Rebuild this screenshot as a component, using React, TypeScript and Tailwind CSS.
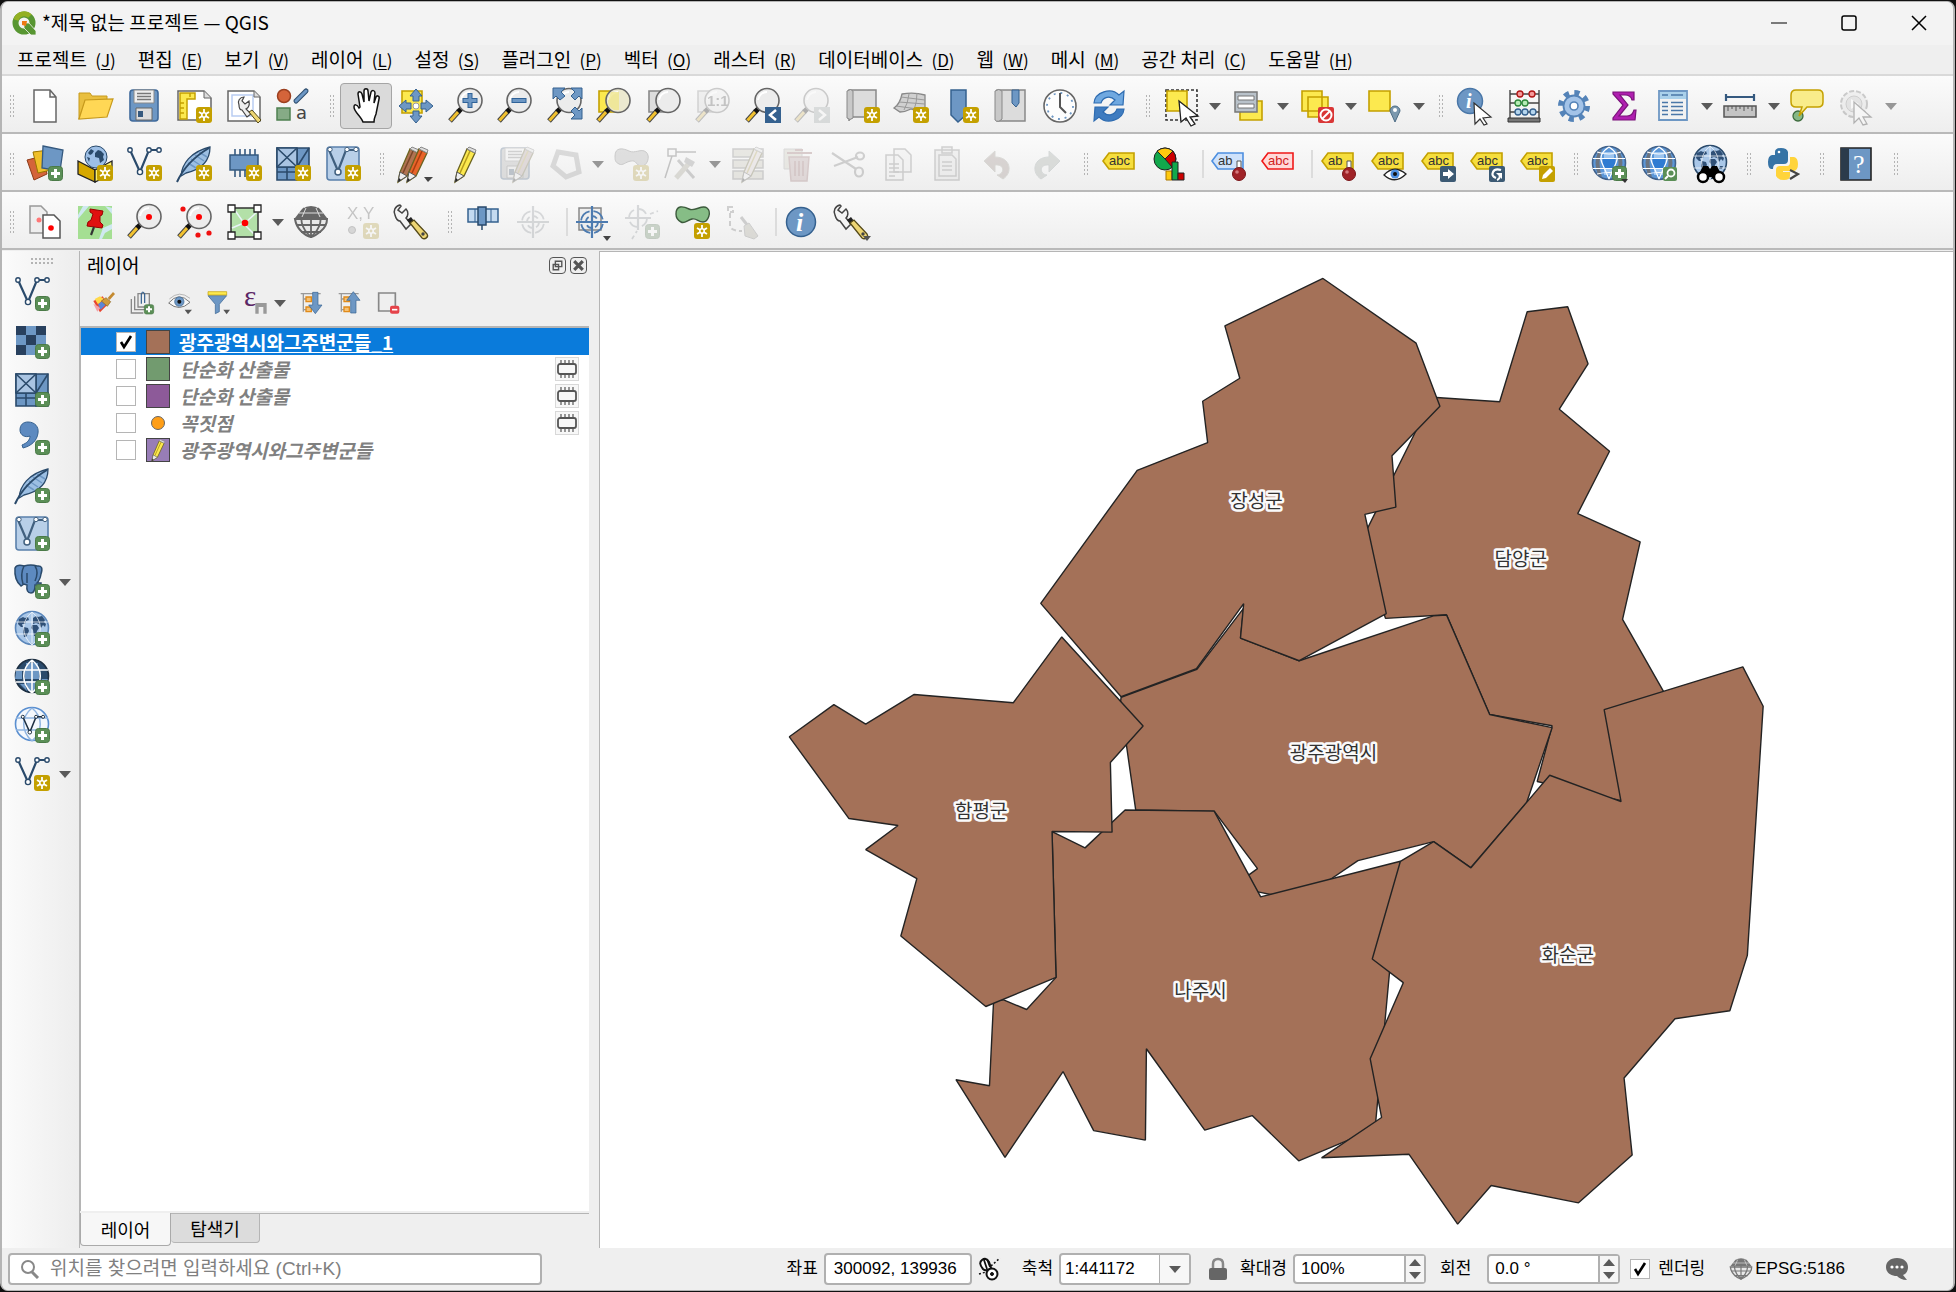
import { useState } from 'react'
import type { ReactNode } from 'react'
import clsx from 'clsx'

const navy = '#2a4a6b'
const blue = '#6d97c4'
const yellow = '#fce94f'
const gold = '#c4a000'

const menus = [
  ['프로젝트', 'J'],
  ['편집', 'E'],
  ['보기', 'V'],
  ['레이어', 'L'],
  ['설정', 'S'],
  ['플러그인', 'P'],
  ['벡터', 'O'],
  ['래스터', 'R'],
  ['데이터베이스', 'D'],
  ['웹', 'W'],
  ['메시', 'M'],
  ['공간 처리', 'C'],
  ['도움말', 'H'],
]

/* ---------- shared icon parts, all on a 36 x 36 grid ---------- */

const StarBadge = ({ y = 19 }: { y?: number }) => (
  <g transform={`translate(20 ${y})`}>
    <rect width="16" height="16" rx="3" fill={gold} />
    <path d="M8 2v12M3 5l10 6M3 11l10-6" stroke="#fff" strokeWidth="1.800" />
    <circle cx="8" cy="8" r="3" fill="#fff" />
    <circle cx="8" cy="8" r="1.400" fill={gold} />
  </g>
)

const PlusBadge = () => (
  <g transform="translate(21 20)">
    <rect x=".5" y=".5" width="14" height="14" rx="3" fill="#5b8f57" stroke="#4a7a47" />
    <path d="M7.500 3v9M3 7.500h9" stroke="#fff" strokeWidth="3" />
  </g>
)

const Handle = () => (
  <>
    <path d="M2 33l9-10" stroke="#444" strokeWidth="5" />
    <path d="M2.500 32.500l8-9" stroke="#f2c230" strokeWidth="3" />
    <path d="M10 24l4-4" stroke="#111" strokeWidth="5" />
  </>
)

const Lens = ({ children, fill = '#ececec' }: { children?: ReactNode; fill?: string }) => (
  <>
    <Handle />
    <circle cx="22" cy="12.500" r="12" fill={fill} stroke="#666" strokeWidth="1.600" />
    <path d="M13 12a9 9 0 0 1 9-8" stroke="#fff" strokeWidth="2" fill="none" />
    {children}
  </>
)

const VNodes = ({ color = navy }: { color?: string }) => (
  <g stroke={color} fill="#fff">
    <path d="M4 4l10 22 9-22h10" fill="none" strokeWidth="2.200" />
    <circle cx="4" cy="4" r="2.200" strokeWidth="1.400" />
    <circle cx="23" cy="4" r="2.200" strokeWidth="1.400" />
    <circle cx="33" cy="4" r="2.200" strokeWidth="1.400" />
    <circle cx="14" cy="26" r="2.600" strokeWidth="1.400" />
  </g>
)

const Feather = () => (
  <>
    <path d="M5 30C6 18 14 6 34 1c0 12-7 22-24 26z" fill="#9cbfe3" stroke={navy} strokeWidth="1.300" />
    <path d="M12 17l8 5M15 13l9 6M19 9l9 6M23 6l8 5" stroke={blue} strokeWidth="1.500" />
    <path d="M1 36C6 25 16 12 33 2" stroke={navy} strokeWidth="2" fill="none" />
  </>
)

const Mesh = () => (
  <g fill={blue} stroke={navy} strokeWidth="1.600">
    <path d="M2 2h20v19H2zM22 2h12v19H22zM2 21h20v13H2z" />
    <path d="M2 2h20v19H2z" fill="#a9c4e2" />
    <path d="M2 2l20 19M22 2L2 21M34 2L22 21M12 21v13M2 26h20" fill="none" />
    <path d="M22 21h12v13H22z" />
  </g>
)

const VTile = () => (
  <>
    <rect x="2" y="1" width="32" height="33" rx="3" fill="#b8cfe8" stroke="#5a80ab" strokeWidth="1.600" />
    <g stroke="#41607f" fill="#fff">
      <path d="M4 4l9 21 8-21h11" fill="none" strokeWidth="2.200" />
      <circle cx="13" cy="26" r="3" strokeWidth="1.500" />
      <circle cx="22" cy="3.500" r="2.200" />
      <circle cx="31" cy="3.500" r="2.200" />
      <circle cx="5" cy="3.500" r="2.200" />
    </g>
  </>
)

const Globe = ({ land, dark, stroke = '#5a86ba' }: { land?: boolean; dark?: boolean; stroke?: string }) => (
  <>
    <circle cx="18" cy="16" r="16.500" fill={dark ? navy : '#a9c7e8'} stroke={stroke} strokeWidth="1.600" />
    {dark && <path d="M2 11h6v8H1zM12 3h12v8H12zM11 11h14v8H11zM28 19h6l-4 7h-4zM6 24h5l2 7zM12 21h11l-1 10h-8z" fill={blue} />}
    {land && (
      <path
        d="M5 7l4-2 2 1 3-1 1 3-3 1-1 3-3 0 1 3-2 0-3-3zM10 15l4 1 1 3-3 6-2 0-1-6zM19 6l3-2 2 1 4-1 3 4-1 2 2 2-1 3-2-2-2 3-2-4-3-1-3 1zM18 13l5 0 2 3-2 3-1 5-2 0-1-6-2-2zM28 20l3 0-1 3-3 0z"
        fill="#2f5077"
      />
    )}
    <path
      d="M18 0v33M2 10h32M2 22h32M18 0c-11 9-11 23 0 33M18 0c11 9 11 23 0 33"
      fill="none" stroke="#fff" strokeWidth={dark ? 1.6 : 1} strokeOpacity={dark ? 1 : 0.7}
    />
  </>
)

const BlueGlobe = () => (
  <>
    <circle cx="18" cy="17" r="16.500" fill="#5c97d8" stroke="#40618a" strokeWidth="1.600" />
    <path d="M11 3q-5 14 0 28l-4-2Q2 17 7 6zM25 3q5 14 0 28l4-2q5-12 0-23z" fill="#6b7480" />
    <path d="M13 6h10v6H13zM13 23h10v6H13z" fill="#9cc4ef" />
    <path d="M12 13h12v9H12z" fill="#2f7bd2" />
    <path d="M2 12.500h32M2 22.500h32M18 1q-11 7-7 16t7 16M18 1q11 7 7 16t-7 16M6 6q12 4 24 0M6 28q12-3 24 0" fill="none" stroke="#fff" strokeWidth="1.200" />
  </>
)

const Wrench = () => (
  <>
    <path d="M2 11c-2-4 0-9 5-10l1 1-3 4 4 3 4-4c3 3 2 7 0 9l5 6-5 5-6-8c-2 0-4-2-5-6z" fill="#f4f4f4" stroke="#444" strokeWidth="1.500" />
    <path d="M14 16l4-3 3 4-4 3z" fill="#222" />
    <path d="M17 19l4-3 13 14c2 3-2 6-5 4z" fill="#eed673" stroke="#554a1a" strokeWidth="1.300" />
    <circle cx="30" cy="30" r="1.700" fill="#444" />
  </>
)

const Tag = ({ fill = '#f6de3d', stroke = gold, text = 'abc', color = '#333' }: { fill?: string; stroke?: string; text?: string; color?: string }) => (
  <>
    <path d="M2 15l6-8h25v16H8z" fill={fill} stroke={stroke} strokeWidth="1.600" />
    <text x="8" y="19" fontSize="13" fontFamily="Liberation Sans, sans-serif" fill={color}>{text}</text>
  </>
)

const Pin = () => (
  <>
    <path d="M27 15h4v9h-4z" fill="#fff" stroke="#555" />
    <circle cx="29" cy="28" r="6.500" fill="#a02328" stroke="#7a1519" />
    <circle cx="27" cy="26" r="1.800" fill="#d47b7e" />
  </>
)

const Floppy = ({ fill = blue }: { fill?: string }) => (
  <>
    <rect x="4" y="2" width="28" height="31" rx="3" fill={fill} stroke="#3f6a9b" strokeWidth="1.600" />
    <path d="M8 2h20v13H8z" fill="#eee" stroke="#888" />
    <path d="M11 5.500h14M11 8.500h14M11 11.500h14" stroke="#777" strokeWidth="1.500" />
    <path d="M10 20h16v12H10z" fill="#ddd" stroke="#666" />
    <path d="M12 23h5v6h-5z" fill="#35597f" />
  </>
)

const Pencil = ({ fill = yellow, line = '#b59b1c', x = 0 }: { fill?: string; line?: string; x?: number }) => (
  <g transform={`translate(${x} 0)`}>
    <path d="M10 26L20 3l8 4-11 23-9 6z" fill={fill} stroke="#6b6320" strokeWidth="1.300" />
    <path d="M13 27L23 5" stroke={line} strokeWidth="1.500" />
    <path d="M20 3l2-2 7 3-1 3z" fill="#ddd" stroke="#888" />
    <path d="M10 26l7 4-9 6z" fill="#eee" stroke="#555" />
    <path d="M8 36l1-4 2 2z" fill="#222" />
  </g>
)

const Target = ({ color = '#4d7bb0' }: { color?: string }) => (
  <g fill="none" stroke={color} strokeWidth="1.800">
    <circle cx="18" cy="18" r="11" strokeDasharray="13 4" strokeDashoffset="-2" />
    <circle cx="18" cy="18" r="6" strokeDasharray="6 3" />
    <path d="M18 2v32M2 18h32" strokeWidth="2.200" />
  </g>
)

const WireGlobe = ({ color = '#666' }: { color?: string }) => (
  <>
    <path d="M9 5q9-6 18 0l7 9H2z" fill={color} />
    <path d="M2 15h32q0 7-6 12t-10 6q-5-1-10-6T2 15z" fill="#e8e8e8" stroke={color} strokeWidth="2" />
    <path d="M3 21h30M8 28h20M18 3v31M11 4c-5 10-3 20 7 29M25 4c5 10 3 20-7 29" fill="none" stroke={color} strokeWidth="1.800" />
    <path d="M13 4l-4 9M23 4l4 9M6 9h24" fill="none" stroke="#ddd" />
  </>
)

const Arrow = () => <path d="M15 14l17 15-8 0 4 7-4 1-4-7-5 5z" fill="#fff" stroke="#222" strokeWidth="1.300" />

const Tree = () => (
  <>
    <path d="M1 4h30M5 4v27M5 12h6M5 28h6" stroke="#999" strokeWidth="2" fill="none" />
    <path d="M9 9h8v7H9zM9 24h8v7H9z" fill="#f6c173" stroke="#e08a1a" strokeWidth="2" />
  </>
)

const icons: Record<string, ReactNode> = {
  new: <path d="M7 2h16l6 7v25H7zM23 2v7h6" fill="#fff" stroke="#666" strokeWidth="1.500" />,
  open: (
    <>
      <path d="M2 31V5h11l2 3h15v6H8z" fill="#e9bf3f" stroke="#c79a1c" />
      <path d="M2 31L8 12l28-1-6 18z" fill="#ffd755" stroke="#c79a1c" strokeWidth="1.200" />
    </>
  ),
  save: <Floppy />,
  layout: (
    <>
      <path d="M2 3h26l7 7v22H2z" fill="#fff" stroke="#666" strokeWidth="1.500" />
      <path d="M28 3v7h7" fill="#ddd" stroke="#666" />
      <path d="M4 5h15v6h-8v20H4z" fill={yellow} stroke={gold} strokeWidth="1.500" />
      <path d="M4 15h4M4 20h4M4 25h4M14 5v4" stroke={gold} strokeWidth="1.500" />
      <StarBadge />
    </>
  ),
  layouts: (
    <>
      <path d="M2 3h26l6 6v24H2z" fill="#fff" stroke="#666" strokeWidth="1.500" />
      <path d="M6 7h21v21H6z" fill="none" stroke="#b9cdf2" strokeWidth="1.500" />
      <path d="M28 3v6h6" fill="#ddd" stroke="#666" />
      <path d="M13 17c-2-4 1-8 5-8l-2 4 3 3 4-3c1 5-1 7-3 8l5 5-4 3-5-7c-2 0-3-2-3-5z" fill="#eee" stroke="#444" strokeWidth="1.200" />
      <path d="M23 24l3-2 9 10-3 3z" fill="#eed673" stroke="#554a1a" />
    </>
  ),
  style: (
    <>
      <circle cx="9" cy="8" r="6.500" fill="#d4643a" stroke="#9c4020" strokeWidth="1.500" />
      <path d="M21 13L31 3" stroke={navy} strokeWidth="5" strokeLinecap="round" />
      <path d="M21 13L31 3" stroke={blue} strokeWidth="3" strokeLinecap="round" />
      <path d="M2 20h13v12H2z" fill="#86ab86" stroke="#4e8050" strokeWidth="1.500" />
      <text x="21" y="31" fontSize="18" fontFamily="DejaVu Sans, sans-serif" fill="#444">a</text>
    </>
  ),
  hand: (
    <path
      d="M15 34c-2-6-9-10-9-15 0-3 3-3 5 1l1-1-2-13c0-3 3-3 4 0l2 8 0-11c0-3 4-3 4 0l1 10 2-9c1-2 4-2 4 1l-1 10 2-6c1-2 4-1 3 2l-3 15c-1 3-2 4-2 8z"
      fill="#fff" stroke="#111" strokeWidth="1.500"
    />
  ),
  pan: (
    <>
      <path d="M4 3h20v22H4z" fill={yellow} stroke={gold} strokeWidth="1.600" />
      <g fill={blue} stroke="#35618f">
        <path d="M18 1l6 7h-3v5h-6V8h-3zM18 35l6-7h-3v-5h-6v5h-3zM1 18l7-6v3h5v6H8v3zM35 18l-7-6v3h-5v6h5v3z" />
      </g>
      <circle cx="18" cy="18" r="3" fill="#fff" stroke="#999" />
    </>
  ),
  zoomIn: <Lens><path d="M22 5v15M14.500 12.500h15" stroke="#2f6298" strokeWidth="5" /><path d="M22 6v13M15.500 12.500h13" stroke={blue} strokeWidth="3" /></Lens>,
  zoomOut: <Lens><path d="M14.500 12.500h15" stroke="#2f6298" strokeWidth="5" /><path d="M15.500 12.500h13" stroke={blue} strokeWidth="3" /></Lens>,
  zoomFull: (
    <Lens>
      <g fill={blue} stroke="#35618f">
        <path d="M6 0h12l-4 4 4 4-5 4-4-4-3 3zM35 0H24l4 4-4 4 4 4 4-4 3 3zM35 31H24l4-4-4-4 4-4 4 4 3-3z" />
      </g>
    </Lens>
  ),
  zoomSel: (
    <>
      <path d="M3 3h20v21H3z" fill={yellow} stroke={gold} strokeWidth="1.600" />
      <Lens fill="#ece9d0"><path d="M15 4h8v18h-5q-6-3-6-9z" fill="#f0e68c" opacity=".8" /></Lens>
    </>
  ),
  zoomLayer: (
    <>
      <path d="M3 3h20v21H3z" fill="#ddd" stroke="#888" strokeWidth="1.600" />
      <Lens />
    </>
  ),
  zoomNative: (
    <>
      <path d="M3 3h20v21H3z" fill="#ddd" stroke="#888" strokeWidth="1.600" />
      <Lens><text x="12" y="18" fontSize="15" fontWeight="bold" fontFamily="Liberation Sans, sans-serif" fill="#555">1:1</text></Lens>
    </>
  ),
  zoomLast: <Lens><path d="M20 19h16v16H20z" fill="#35618f" /><path d="M31 22l-6 5 6 5" stroke="#fff" strokeWidth="2.500" fill="none" /></Lens>,
  zoomNext: <Lens><path d="M20 19h16v16H20z" fill="#9aa8a8" /><path d="M25 22l6 5-6 5" stroke="#fff" strokeWidth="2.500" fill="none" /></Lens>,
  newMap: (
    <>
      <path d="M5 2h27v27H9q-4 1-4 4z" fill="#dcdcdc" stroke="#888" strokeWidth="1.500" />
      <path d="M3 3q4-3 6 0v27q-3 3-6 0z" fill="#c8c8c8" stroke="#888" />
      <StarBadge />
    </>
  ),
  map3d: (
    <>
      <path d="M1 20q6-4 8-14 12-2 23 1l0 19-14-5q-6 3-11 3z" fill="#d0d0d0" stroke="#888" strokeWidth="1.300" />
      <path d="M6 14l26 2M16 6q-1 9-5 16M24 5q0 9-3 17M3 18l29 4M8 9l24 3" fill="none" stroke="#999" />
      <StarBadge />
    </>
  ),
  newBookmark: (
    <>
      <path d="M8 2h15v25l-8 7-7-7z" fill={blue} stroke="#35618f" strokeWidth="1.500" />
      <StarBadge />
    </>
  ),
  bookmarks: (
    <>
      <path d="M5 2h28v31H5z" fill="#dcdcdc" stroke="#888" strokeWidth="1.500" />
      <path d="M3 3q4-3 7 0v28q-4 4-7 1z" fill="#c8c8c8" stroke="#888" />
      <path d="M20 2h7v13l-3 4-4-4z" fill={blue} stroke="#35618f" />
    </>
  ),
  clock: (
    <>
      <circle cx="18" cy="18" r="16" fill="#fdfdfd" stroke="#666" strokeWidth="1.600" />
      <circle cx="18" cy="18" r="13" fill="none" stroke={blue} strokeWidth="1.800" strokeDasharray="2 4.800" />
      <path d="M18 5v14l6 6" fill="none" stroke="#555" strokeWidth="2" />
    </>
  ),
  refresh: (
    <>
      <path d="M3 15C4 4 20-1 28 7l5-4-1 14H19l5-5c-5-5-12-3-14 3z" fill="#6fa8e0" stroke="#2d6bb0" strokeWidth="1.200" />
      <path d="M33 21C32 32 16 37 8 29l-5 4 1-14h13l-5 5c5 5 12 3 14-3z" fill="#3f7cc0" stroke="#2d6bb0" strokeWidth="1.200" />
    </>
  ),
  select: (
    <>
      <path d="M3 2h31v30H3z" fill="none" stroke="#333" strokeWidth="1.600" strokeDasharray="3 2" />
      <path d="M4 3h20v20H4z" fill={yellow} stroke={gold} strokeWidth="1.600" />
      <path d="M16 13l19 15-8 1 5 7-4 2-5-8-5 4z" fill="#fff" stroke="#222" strokeWidth="1.300" />
    </>
  ),
  selectForm: (
    <>
      <path d="M9 13h22v19H9z" fill={yellow} stroke={gold} strokeWidth="1.600" />
      <path d="M4 4h22v20H4z" fill="#b9c2ca" stroke="#777" strokeWidth="1.500" />
      <path d="M7 8h16v4H7zM7 16h16v4H7z" fill="#fff" stroke="#777" />
    </>
  ),
  deselect: (
    <>
      <path d="M3 3h20v20H3zM9 9h20v20H9z" fill={yellow} stroke={gold} strokeWidth="1.600" />
      <rect x="19" y="19" width="16" height="16" rx="2" fill="#d93636" />
      <circle cx="27" cy="27" r="5.500" fill="none" stroke="#fff" strokeWidth="2" />
      <path d="M23 31l8-8" stroke="#fff" strokeWidth="2" />
    </>
  ),
  selectLoc: (
    <>
      <path d="M2 3h21v20H2z" fill={yellow} stroke={gold} strokeWidth="1.600" />
      <path d="M28 34l-5-11a5 5 0 1 1 10 0z" fill="#7b98ae" stroke="#4d6d86" />
      <circle cx="28" cy="22" r="2" fill="#fff" />
    </>
  ),
  identify: (
    <>
      <circle cx="14" cy="13" r="12.500" fill={blue} stroke="#4a77a8" strokeWidth="1.500" />
      <text x="10" y="20" fontSize="20" fontStyle="italic" fontWeight="bold" fontFamily="Liberation Serif, serif" fill="#fff">i</text>
      <path d="M18 15l17 14-8 1 4 6-3 1-4-6-5 5z" fill="#fff" stroke="#333" strokeWidth="1.200" />
    </>
  ),
  abacus: (
    <>
      <path d="M4 2v28M33 2v28M4 6h29M4 15h29M4 24h29" stroke="#444" strokeWidth="1.400" />
      <path d="M2 30h32v4H2z" fill="#777" stroke="#333" />
      <g strokeWidth="1.300">
        <g fill="#f59a9a" stroke="#b01515"><circle cx="14" cy="6" r="3" /><circle cx="26" cy="6" r="3" /></g>
        <g fill="#b6ecb6" stroke="#2f8a3c"><circle cx="12" cy="15" r="3" /><circle cx="19" cy="15" r="3" /></g>
        <g fill="#b6d6ee" stroke="#35618f"><circle cx="12" cy="24" r="3" /><circle cx="19" cy="24" r="3" /><circle cx="27" cy="24" r="3" /></g>
      </g>
    </>
  ),
  gear: (
    <>
      <circle cx="18" cy="18" r="13" fill="none" stroke="#5483b8" strokeWidth="6" strokeDasharray="5 5.200" />
      <circle cx="18" cy="18" r="10.500" fill="#a3c3e8" stroke="#5483b8" strokeWidth="1.800" />
      <circle cx="18" cy="18" r="4" fill="#fff" stroke="#5483b8" strokeWidth="1.600" />
    </>
  ),
  sigma: <path d="M7 4h21v8h-2c-1-4-3-5-7-5h-5l8 10-9 11h8c4 0 6-2 7-6h2l-1 10H7v-2l10-13L7 6z" fill="#b01fb0" stroke="#7a127a" strokeWidth="1.200" />,
  table: (
    <>
      <path d="M4 3h28v29H4z" fill="#f2f2f2" stroke={blue} strokeWidth="1.800" />
      <path d="M5 4h26v7H5z" fill="#a9d0ea" />
      <path d="M7 7h6M16 7h12M7 14.500h6M16 14.500h12M7 18.500h6M16 18.500h12M7 22.500h6M16 22.500h12M7 26.500h6M16 26.500h12" stroke="#4a77a8" strokeWidth="1.500" />
    </>
  ),
  measure: (
    <>
      <path d="M4 9h28M4 6v7M32 6v7" stroke="#35597f" strokeWidth="2.200" />
      <path d="M2 18h32v11H2z" fill="#c4c4c4" stroke="#555" strokeWidth="1.500" />
      <path d="M6 18v5M10 18v3M14 18v5M18 18v3M22 18v5M26 18v3M30 18v5" stroke="#555" />
    </>
  ),
  tips: (
    <>
      <circle cx="9" cy="28" r="5" fill="#86b886" stroke="#3d6b3d" strokeWidth="1.300" />
      <path d="M7 2h22q5 0 5 5v7q0 5-5 5H18l-8 9 3-9H7q-5 0-5-5V7q0-5 5-5z" fill="#f9ec8a" stroke={gold} strokeWidth="1.500" />
    </>
  ),
  action: (
    <>
      <circle cx="15" cy="16" r="13" fill="#ddd" stroke="#666" strokeWidth="2" strokeDasharray="5 2" />
      <circle cx="15" cy="16" r="8" fill="#bbb" stroke="#777" />
      <path d="M12 11l8 5-8 5z" fill="#fff" />
      <Arrow />
    </>
  ),
  addLayers: (
    <>
      <path d="M0 14l16-4 4 18-13 6z" fill="#d4643a" stroke="#8c3a18" />
      <path d="M6 6l16-2 2 20-13 3z" fill="#efbf2a" stroke="#9a7500" />
      <path d="M16 0l20 4-3 21-18-3z" fill={blue} stroke="#35597f" strokeWidth="1.300" />
      <PlusBadge />
    </>
  ),
  geopackage: (
    <>
      <circle cx="19" cy="11" r="11" fill="#9dbfe6" stroke={navy} />
      <path d="M11 7l3-4 3 2-2 3-2 1zM18 7l3-3 3 1 3 3-1 3 1 3-4 3-1-5-4-1zM10 11l3 1-1 4z" fill={navy} />
      <path d="M1 15l17 9v12L1 28z" fill="#d6a800" stroke="#222" strokeWidth="1.300" />
      <path d="M18 24l17-9v13l-17 8z" fill="#fdf06a" stroke="#222" strokeWidth="1.300" />
      <StarBadge />
    </>
  ),
  newShp: <><VNodes /><StarBadge /></>,
  newSpatialite: <><Feather /><StarBadge /></>,
  newMemory: (
    <>
      <path d="M9 3v28M14 3v28M19 3v28M24 3v28M29 3v28" stroke="#35597f" strokeWidth="1.600" />
      <path d="M4 9h28v15H4z" fill={blue} stroke="#35597f" strokeWidth="1.500" />
      <StarBadge />
    </>
  ),
  newMesh: <><Mesh /><StarBadge /></>,
  newVirtual: <><VTile /><StarBadge /></>,
  edits: <><Pencil x={-7} fill="#b07352" line="#7a4528" /><Pencil x={2} fill="#e8642a" line="#a83c10" /><path d="M27 31h9l-5 5z" fill="#444" /></>,
  pencil: <Pencil />,
  saveEdits: <><Floppy fill="#aaa" /><Pencil x={8} fill="#b99" /></>,
  addPoly: <path d="M12 6l18 3 3 17-13 5L7 20z" fill="none" stroke="#999" strokeWidth="5" />,
  addBlob: <><path d="M2 10C2 1 10 2 16 5s12-3 17 1 1 15-5 14-4-6-10-5-8 5-12 3-4-4-4-8z" fill="#aaa" stroke="#666" /><StarBadge /></>,
  vertex: (
    <>
      <path d="M5 3h8v7H5zM13 6h20M9 10L2 32" fill="none" stroke="#555" strokeWidth="1.500" />
      <path d="M15 14l16 18" stroke="#777" strokeWidth="3" />
      <path d="M28 15L13 32" stroke="#a59f85" strokeWidth="5" />
      <path d="M23 11l9 5-3 5-8-5z" fill="#888" />
    </>
  ),
  attrEdit: (
    <>
      <path d="M3 3h30v8H3zM3 14h30v8H3zM3 25h30v8H3z" fill="#c9c5ac" stroke="#777" strokeWidth="1.500" />
      <Pencil x={4} fill="#dcc" />
    </>
  ),
  trash: (
    <>
      <path d="M4 3h18v20H4z" fill="#ccc9b0" stroke="#999" />
      <path d="M9 11h20l-2 24H11z" fill="#c39a9a" stroke="#a66" strokeWidth="1.500" />
      <path d="M7 7h25M15 4h8M15 15v15M19 15v15M23 15v15" stroke="#a66" strokeWidth="2" />
    </>
  ),
  cut: (
    <g fill="none" stroke="#777" strokeWidth="2.200">
      <path d="M2 7l24 16M4 20l24-9" />
      <ellipse cx="30" cy="10" rx="4" ry="3.500" /><ellipse cx="29" cy="26" rx="4" ry="4.500" />
    </g>
  ),
  copy: (
    <g fill="#eee" stroke="#777" strokeWidth="1.500">
      <path d="M14 3h11l6 6v17H14zM6 9h12l5 5v20H6z" />
      <path d="M9 18h10M9 22h10M9 26h10M9 30h6" />
    </g>
  ),
  paste: (
    <g fill="#ddd" stroke="#777" strokeWidth="1.500">
      <path d="M6 4h24v30H6zM13 1h10v6H13zM10 9h13l4 4v17H10z" />
      <path d="M13 16h10M13 20h10M13 24h10" />
    </g>
  ),
  undo: <path d="M5 15L16 5v6c16 0 18 16 8 22l-6-4c8-1 8-11-2-10v7z" fill="#a0867e" stroke="#998" />,
  redo: <path d="M31 15L20 5v6C4 11 2 27 12 33l6-4c-8-1-8-11 2-10v7z" fill="#99a399" stroke="#899" />,
  label: <Tag />,
  diagram: (
    <>
      <circle cx="14" cy="13" r="11" fill="#12a84c" stroke="#222" />
      <path d="M14 13L6 5q8-6 16 0z" fill="#ffc90e" stroke="#222" />
      <path d="M14 13l8-8q6 8-1 16z" fill="#c00" stroke="#222" />
      <path d="M15 25h6v9h-6z" fill="#ffc90e" stroke="#a70" />
      <path d="M21 16h6v18h-6z" fill="#12a84c" stroke="#222" />
      <path d="M27 27h6v7h-6z" fill="#c00" stroke="#222" />
    </>
  ),
  labelPin: <><Tag fill="#cfe2fb" stroke="#4d8fe0" text="ab" /><Pin /></>,
  labelRed: <Tag fill="#ffd9d9" stroke="#f01818" color="#d02020" />,
  tagPin: <><Tag text="ab" /><Pin /></>,
  tagEye: (
    <>
      <Tag />
      <path d="M14 29q10-11 22-1-11 11-22 1z" fill="#fff" stroke="#222" strokeWidth="1.300" />
      <circle cx="25" cy="28" r="4.500" fill="#4d8fe0" /><circle cx="25" cy="28" r="2" fill="#111" />
    </>
  ),
  tagMove: <><Tag /><rect x="20" y="20" width="16" height="16" rx="2" fill="#3c5a74" /><path d="M23 26h5v-3l6 5-6 5v-3h-5z" fill="#fff" /></>,
  tagRotate: (
    <>
      <Tag />
      <rect x="20" y="20" width="16" height="16" rx="2" fill="#3c5a74" />
      <path d="M32 24q-6-2-8 2t3 6" fill="none" stroke="#fff" strokeWidth="2.200" />
      <path d="M27 27h6v6z" fill="#fff" /><path d="M31 29q0 4-3 5" fill="none" stroke="#fff" strokeWidth="2" />
    </>
  ),
  tagEdit: <><Tag /><rect x="20" y="20" width="16" height="16" rx="2" fill={gold} /><path d="M23 33l1-4 7-7 3 3-7 7z" fill="#fff" /></>,
  webAdd: <><BlueGlobe /><PlusBadge /><path d="M30 33h7l-3 4z" fill="#333" /></>,
  webSearch: (
    <>
      <BlueGlobe />
      <rect x="22" y="21" width="14" height="14" rx="2" fill="#5b8f57" />
      <circle cx="30" cy="27" r="3.500" fill="none" stroke="#fff" strokeWidth="1.800" /><path d="M27 30l-3 3" stroke="#fff" strokeWidth="2" />
    </>
  ),
  metasearch: (
    <>
      <Globe land stroke={navy} />
      <path d="M6 30l5-10h5l2 3 2-3h5l5 10-5 6-6-5h-2l-6 5z" fill="#000" />
      <circle cx="11" cy="31" r="5" fill="#fff" stroke="#000" strokeWidth="2.500" />
      <circle cx="27" cy="31" r="5" fill="#fff" stroke="#000" strokeWidth="2.500" />
    </>
  ),
  python: (
    <>
      <path d="M10 9V6q0-4 6-4t7 4v8q0 4-4 4h-7q-4 0-4 5H6q-3-1-3-7t4-7h9z" fill="#3673a5" />
      <path d="M25 11h4q4 1 4 7t-4 7H18v1h7v4q0 4-6 4t-8-4v-6q0-4 4-4h7q3 0 3-4z" fill="#ffd43b" />
      <circle cx="14" cy="6" r="1.300" fill="#fff" />
      <path d="M25 24l8 4-8 5" fill="none" stroke="#444" strokeWidth="2.200" />
    </>
  ),
  help: (
    <>
      <path d="M3 2h30v32H3z" fill={blue} stroke="#222" strokeWidth="1.600" />
      <path d="M3 2h8v32H3z" fill="#2b3b4b" />
      <text x="15" y="27" fontSize="26" fontFamily="Liberation Serif, serif" fill="#fff">?</text>
    </>
  ),
  copyCoord: (
    <g stroke="#555" strokeWidth="1.500">
      <path d="M3 2h11l6 6v21H3z" fill="#eee" stroke="#999" />
      <path d="M16 11h11l6 6v17H16z" fill="#fff" />
      <circle cx="12" cy="16" r="2.500" fill="#f77" stroke="none" />
      <circle cx="24" cy="24" r="2.800" fill="red" stroke="none" />
    </g>
  ),
  mapPin: (
    <>
      <path d="M1 2h34v33H1z" fill="#a5df93" />
      <path d="M6 2l-5 9v4L12 2zM22 35l4-11 9-4v5l-7 4-3 6zM28 2l7 8V4z" fill="#cfe9f0" />
      <path d="M13 5l13 2-1 4-2 1 0 6 3 3-1 3-15-2 1-4 3-2 2-6-3-2z" fill="#e01010" stroke="#900" />
      <path d="M17 23l-3 8" stroke="#333" strokeWidth="2.200" />
    </>
  ),
  magPoint: <Lens><circle cx="22" cy="13" r="3" fill="red" /></Lens>,
  magPoints: <Lens><circle cx="22" cy="13" r="3" fill="red" /><g fill="#f01010"><circle cx="6" cy="5" r="2.600" /><circle cx="21" cy="31" r="2.600" /><circle cx="32" cy="29" r="2.600" /></g></Lens>,
  extent: (
    <>
      <path d="M5 4h27v29H5z" fill="#b3e0a8" stroke="#333" strokeWidth="1.500" />
      <path d="M8 5l12 17 10 10M6 24l14-6 11-10" fill="none" stroke="#e9f3f7" strokeWidth="1.500" />
      <circle cx="19" cy="19" r="3.300" fill="red" />
      <path d="M2 1h7v7H2zM28 1h7v7h-7zM2 28h7v7H2zM28 28h7v7h-7z" fill="#fff" stroke="#222" strokeWidth="1.300" />
    </>
  ),
  wire: <WireGlobe />,
  xy: (
    <>
      <text x="4" y="15" fontSize="17" fontFamily="Liberation Sans, sans-serif" fill="#555">X,Y</text>
      <circle cx="9" cy="26" r="3.500" fill="#999" stroke="#555" />
      <StarBadge />
    </>
  ),
  wrench: <Wrench />,
  wrenchMenu: <><Wrench /><path d="M30 32h8l-4 5z" fill="#555" /></>,
  gps: (
    <>
      <path d="M3 5h30v13H3z" fill="#c4daf0" stroke="#35618f" strokeWidth="1.500" />
      <path d="M10 5v13M26 5v13" stroke="#35618f" />
      <path d="M13 3h8v18h-8z" fill={blue} stroke={navy} strokeWidth="1.500" />
      <path d="M17 21v5" stroke={navy} strokeWidth="1.500" />
    </>
  ),
  target: <Target color="#8a939c" />,
  targetBox: (
    <>
      <path d="M5 4h22v22H5z" fill="#eee" stroke="#888" strokeWidth="1.500" />
      <Target />
      <path d="M29 32h8l-4 5z" fill="#444" />
    </>
  ),
  targetAdd: (
    <>
      <g fill="none" stroke="#8a939c" strokeWidth="1.800">
        <circle cx="14" cy="14" r="9" strokeDasharray="10 4" /><path d="M14 1v25M1 14h26" strokeWidth="2.200" />
        <path d="M8 35l5-8M26 10l8-3" strokeDasharray="4 3" />
      </g>
      <PlusBadge />
    </>
  ),
  greenBlob: <><path d="M2 10C2 1 9 2 15 5s13-5 18-1 1 14-4 14-6-4-11-3-7 5-11 3-5-4-5-8z" fill="#86bd86" stroke="#3d5b3d" strokeWidth="1.400" /><StarBadge /></>,
  brushPath: (
    <>
      <path d="M4 3h5v5H4zM6 9v13q1 5 12 5" fill="none" stroke="#777" strokeWidth="2" strokeDasharray="5 3" />
      <path d="M17 13l7 9" stroke="#777" strokeWidth="3" />
      <path d="M20 22l5-3 9 13-4 3-9-3z" fill="#a9a58c" stroke="#777" />
    </>
  ),
  info: (
    <>
      <circle cx="18" cy="18" r="14.500" fill={blue} stroke="#35618f" strokeWidth="1.500" />
      <text x="13" y="27" fontSize="26" fontStyle="italic" fontWeight="bold" fontFamily="Liberation Serif, serif" fill="#fff">i</text>
    </>
  ),
  addVector: <><VNodes /><PlusBadge /></>,
  addRaster: (
    <>
      <path d="M2 2h30v29H2z" fill={blue} />
      <path d="M2 2h10v9H2zM22 2h10v9H22zM12 11h10v10H12zM2 21h10v10H2z" fill="#28405e" />
      <PlusBadge />
    </>
  ),
  addMesh: <><Mesh /><PlusBadge /></>,
  addCsv: <><path d="M14 2c7 0 11 5 10 11-1 8-7 13-15 15l-1-3c5-2 8-5 8-9-5 2-10-1-10-6s3-8 8-8z" fill="#5d8ac0" stroke="#35618f" /><PlusBadge /></>,
  addSpatialite: <><Feather /><PlusBadge /></>,
  addVirtual: <><VTile /><PlusBadge /></>,
  addPostgis: (
    <>
      <path d="M1 4q2-4 9-2 7-2 13 0 7-1 4 8-1 6-4 9h4v2h-6q0 8-4 8-5 0-4-8l-3-1-3 2Q0 16 1 4z" fill="#5d8ac0" stroke={navy} strokeWidth="1.500" />
      <path d="M10 2q-4 8-1 18M21 2q4 6 0 15M13 9v10" fill="none" stroke={navy} strokeWidth="1.500" />
      <PlusBadge />
    </>
  ),
  addWms: <><Globe land /><PlusBadge /></>,
  addWcs: <><Globe dark stroke="#1d2f42" /><PlusBadge /></>,
  addWfs: (
    <>
      <circle cx="18" cy="16" r="16.500" fill="#f4f8fd" stroke="#5a8fd0" strokeWidth="1.600" />
      <path d="M2 10h32M2 22h32M18 0c-11 9-11 23 0 33M18 0c11 9 11 23 0 33" fill="none" stroke="#8fb4e0" strokeWidth="1.500" />
      <g transform="translate(6 6) scale(.7)"><VNodes color="#1d2f42" /></g>
      <PlusBadge />
    </>
  ),
  brush: (
    <>
      <path d="M2 15l14-7 8 12-12 12z" fill="#e8442e" /><path d="M4 12l8-4 6 4-9 8z" fill="#ffd94a" /><path d="M2 19l6 12 5-6z" fill="#f3a0a8" /><path d="M13 28l9-9-5-5-8 6z" fill="#5b86d8" />
      <path d="M14 15L23 23l5-7-7-6z" fill="#cf9a3c" stroke="#8a6420" /><path d="M25 12l8-9" stroke="#c48a30" strokeWidth="4" />
    </>
  ),
  addGroup: <><path d="M2 12v21h18M7 8v20h18M12 4h17v20H12z" fill="none" stroke="#888" strokeWidth="2" /><path d="M22 18V5q-3-7-5 0v14" fill="none" stroke="#35618f" strokeWidth="1.800" /><PlusBadge /></>,
  eye: (
    <>
      <path d="M1 18q15-18 32-1-16 15-32 1z" fill="#f8f8f8" stroke="#777" strokeWidth="1.500" /><path d="M2 12q15-14 31-1" fill="none" stroke="#999" />
      <circle cx="17" cy="16" r="7" fill={blue} stroke="#35618f" /><circle cx="17" cy="16" r="3" fill="#111" />
      <path d="M25 28h11l-6 7z" fill="#555" />
    </>
  ),
  filter: <><path d="M3 7l11 13v14l6-3V20L31 7z" fill={blue} stroke="#35618f" /><path d="M3 1h28v5H3z" fill={yellow} stroke={gold} /><path d="M26 28h10l-5 7z" fill="#555" /></>,
  expr: (
    <>
      <text x="0" y="22" fontSize="44" fontFamily="Liberation Serif, serif" fill="#5c2766">ε</text>
      <path d="M17 18h17v16h-5V24h-7v10h-5z" fill="#999" />
    </>
  ),
  expand: <><Tree /><path d="M19 2h8v19h6L23 34 13 21h6z" fill={blue} stroke="#35618f" /></>,
  collapse: <><Tree /><path d="M19 33h8V14h6L23 1 13 14h6z" fill={blue} stroke="#35618f" /></>,
  remove: <><path d="M4 3h25v27H4z" fill="none" stroke="#888" strokeWidth="2.500" /><rect x="21" y="22" width="14" height="12" rx="3" fill="#e5434a" /><path d="M24 28h8" stroke="#fff" strokeWidth="2.500" /></>,
}

const Icon = ({ name, className = 'size-9' }: { name: string; className?: string }) => (
  <svg viewBox="0 0 36 36" fill="none" aria-hidden className={clsx('shrink-0 overflow-visible', className)}>
    {icons[name]}
  </svg>
)

const Caret = ({ className }: { className?: string }) => (
  <svg viewBox="0 0 12 7" aria-hidden className={clsx('h-[7px] w-3', className)}>
    <path d="M0 0h12L6 7z" fill="#5a5a5a" />
  </svg>
)

/* ---------- toolbars ---------- */

type Item = { icon: string; label: string; menu?: boolean; off?: boolean; active?: boolean } | 'sep'
type Group = { width: string; items: Item[] }

const on = (icon: string, label: string): Item => ({ icon, label })
const off = (icon: string, label: string): Item => ({ icon, label, off: true })
const drop = (icon: string, label: string): Item => ({ icon, label, menu: true })
const dropOff = (icon: string, label: string): Item => ({ icon, label, menu: true, off: true })

const rows: Group[][] = [
  [
    {
      width: 'w-[304px]',
      items: [on('new', '새 프로젝트'), on('open', '열기'), on('save', '저장'), on('layout', '새 인쇄 조판'), on('layouts', '조판 관리자'), on('style', '스타일 관리자')],
    },
    {
      width: 'w-[800px]',
      items: [
        { icon: 'hand', label: '이동', active: true },
        on('pan', '선택한 항목으로 이동'), on('zoomIn', '확대'), on('zoomOut', '축소'), on('zoomFull', '전체 보기'), on('zoomSel', '선택 영역으로 확대'),
        on('zoomLayer', '레이어로 확대'), off('zoomNative', '원본 해상도'), on('zoomLast', '이전 보기'), off('zoomNext', '다음 보기'), on('newMap', '새 맵 뷰'),
        on('map3d', '새 3차원 맵 뷰'), on('newBookmark', '새 북마크'), on('bookmarks', '북마크 표시'), on('clock', '시간 제어기'), on('refresh', '새로고침'),
      ],
    },
    {
      width: 'w-[277px]',
      items: [drop('select', '객체 선택'), drop('selectForm', '값으로 선택'), drop('deselect', '선택 해제'), drop('selectLoc', '위치로 선택')],
    },
    {
      width: 'w-[456px]',
      items: [
        on('identify', '객체 식별'), on('abacus', '필드 계산기'), on('gear', '공간 처리 툴박스'), on('sigma', '통계 요약'), drop('table', '속성 테이블'),
        drop('measure', '측정'), on('tips', '맵 도움말'), dropOff('action', '액션 실행'),
      ],
    },
  ],
  [
    {
      width: 'w-[354px]',
      items: [
        on('addLayers', '데이터 소스 관리자'), on('geopackage', '새 GeoPackage'), on('newShp', '새 Shapefile'), on('newSpatialite', '새 SpatiaLite'),
        on('newMemory', '새 임시 레이어'), on('newMesh', '새 메시'), on('newVirtual', '새 가상 레이어'),
      ],
    },
    {
      width: 'w-[688px]',
      items: [
        on('edits', '현재 편집'), on('pencil', '편집 모드'), off('saveEdits', '편집 저장'), dropOff('addPoly', '선분으로 디지타이즈'), off('addBlob', '폴리곤 추가'),
        dropOff('vertex', '꼭짓점 도구'), off('attrEdit', '속성 수정'), off('trash', '삭제'), off('cut', '잘라내기'), off('copy', '복사'), off('paste', '붙여넣기'),
        off('undo', '되돌리기'), off('redo', '다시 실행'),
      ],
    },
    {
      width: 'w-[474px]',
      items: [
        on('label', '라벨 옵션'), on('diagram', '다이어그램 옵션'), 'sep', on('labelPin', '고정된 라벨 강조'), on('labelRed', '배치 안 된 라벨'), 'sep',
        on('tagPin', '라벨 고정'), on('tagEye', '라벨 표시'), on('tagMove', '라벨 이동'), on('tagRotate', '라벨 회전'), on('tagEdit', '라벨 변경'),
      ],
    },
    { width: 'w-[157px]', items: [on('webAdd', '웹 서비스 추가'), on('webSearch', '웹 서비스 검색'), on('metasearch', '메타 검색')] },
    { width: 'w-[57px]', items: [on('python', '파이썬 콘솔')] },
    { width: 'w-[58px]', items: [on('help', '도움말')] },
    { width: 'w-0', items: [] },
  ],
  [
    {
      width: 'w-[422px]',
      items: [
        on('copyCoord', '좌표 복사'), on('mapPin', '맵 고정'), on('magPoint', '좌표로 확대'), on('magPoints', '다중 좌표 확대'), drop('extent', '범위'),
        on('wire', '좌표계'), off('xy', '좌표 변환'), on('wrench', '설정'),
      ],
    },
    {
      width: 'w-[424px]',
      items: [
        on('gps', 'GPS 연결'), off('target', '중심 이동'), 'sep', on('targetBox', '중심 맞추기'), off('targetAdd', '꼭짓점 추가'), on('greenBlob', '객체 생성'),
        off('brushPath', '트랙 초기화'), 'sep', on('info', 'GPS 정보'), on('wrenchMenu', 'GPS 설정'),
      ],
    },
  ],
]

const Grip = () => (
  <div className="flex w-4 shrink-0 justify-center">
    <div className="h-6 w-1.5 bg-[radial-gradient(circle,#b4b4b4_1px,transparent_1px)] bg-[length:3px_4px]" />
  </div>
)

function ToolItem({ item }: { item: Item }) {
  if (item === 'sep') return <div className="h-7 w-[10px] shrink-0 border-r-2 border-[#dcdcdc]" />
  return (
    <>
      <button
        type="button"
        aria-label={item.label}
        disabled={item.off}
        className={clsx('flex h-[46px] min-w-0 flex-1 items-center justify-center rounded-sm', item.active && 'border border-[#a5a5a5] bg-[#dadada]')}
      >
        <Icon name={item.icon} className={clsx('size-9', item.off && 'opacity-30 grayscale-[40%]')} />
      </button>
      {item.menu && (
        <button type="button" aria-label={`${item.label} 메뉴`} disabled={item.off} className="flex h-[46px] w-[17px] shrink-0 items-center justify-center">
          <Caret className={clsx(item.off && 'opacity-60')} />
        </button>
      )}
    </>
  )
}

function Toolbar({ groups }: { groups: Group[] }) {
  return (
    <div role="toolbar" className="flex h-[58px] shrink-0 items-center border-b-2 border-[#b9b9b9] bg-linear-to-b from-[#fbfbfb] to-[#eeeeee] pt-1 pl-0.5">
      {groups.map((g, i) => (
        <div key={i} className="flex items-center">
          <Grip />
          <div className={clsx('flex items-center', g.items.length > 0 && 'pr-1.5', g.width)}>
            {g.items.map((item, j) => <ToolItem key={j} item={item} />)}
          </div>
        </div>
      ))}
    </div>
  )
}

const sideItems: Item[] = [
  on('addVector', '벡터 레이어 추가'), on('addRaster', '래스터 레이어 추가'), on('addMesh', '메시 레이어 추가'), on('addCsv', '텍스트 레이어 추가'),
  on('addSpatialite', 'SpatiaLite 레이어 추가'), on('addVirtual', '가상 레이어 추가'), drop('addPostgis', 'PostGIS 레이어 추가'), on('addWms', 'WMS 레이어 추가'),
  on('addWcs', 'WCS 레이어 추가'), on('addWfs', 'WFS 레이어 추가'), drop('newShp', '새 Shapefile 레이어'),
]

function SideBar() {
  return (
    <div role="toolbar" className="flex w-[77px] shrink-0 flex-col bg-linear-to-r from-[#fbfbfb] to-[#ededed] pt-1.5">
      <div className="mb-[5px] ml-7 h-2 w-6 bg-[radial-gradient(circle,#b4b4b4_1px,transparent_1px)] bg-[length:4px_4px]" />
      {sideItems.map((item) => item !== 'sep' && (
        <div key={item.label} className="flex h-12 items-center pl-3">
          <button type="button" aria-label={item.label}><Icon name={item.icon} /></button>
          {item.menu && <button type="button" aria-label={`${item.label} 메뉴`} className="pl-[9px]"><Caret /></button>}
        </div>
      ))}
    </div>
  )
}

/* ---------- layer panel ---------- */

const layers = [
  { name: '광주광역시와그주변군들_1', swatch: 'bg-[#a47158]', selected: true },
  { name: '단순화 산출물', swatch: 'bg-[#729b6f]', memory: true },
  { name: '단순화 산출물', swatch: 'bg-[#8d5a99]', memory: true },
  { name: '꼭짓점', memory: true },
  { name: '광주광역시와그주변군들', swatch: 'bg-[#987db7]', editing: true },
]

const panelTools = ['brush', 'addGroup', 'eye', 'filter', 'expr', 'expand', 'collapse', 'remove']
const panelLabels = ['스타일 패널', '그룹 추가', '맵 테마', '범례 필터', '표현식 필터', '모두 펼치기', '모두 접기', '레이어 제거']

function CheckBox({ id, checked, onChange }: { id: string; checked: boolean; onChange: () => void }) {
  return (
    <span className="relative flex size-5 shrink-0">
      <input id={id} type="checkbox" checked={checked} onChange={onChange} className="size-5 appearance-none border border-[#b5b5b5] bg-white" />
      {checked && (
        <svg viewBox="0 0 20 20" aria-hidden className="pointer-events-none absolute inset-0 size-5">
          <path d="M5 10l3 5 7-11" fill="none" stroke="#000" strokeWidth="2.600" />
        </svg>
      )}
    </span>
  )
}

function LayerPanel() {
  const [visible, setVisible] = useState([true, false, false, false, false])
  const toggle = (i: number) => setVisible(visible.map((v, j) => (i === j ? !v : v)))

  return (
    <section className="flex w-[520px] shrink-0 flex-col border-l border-[#b5b5b5] bg-[#efefef] pr-2.5">
      <header className="flex h-[29px] items-center gap-1 pr-0.5 pl-[7px]">
        <h2 className="flex-1 text-[19px]">레이어</h2>
        <button type="button" aria-label="패널 분리" className="size-[17px] rounded-sm border border-[#555]">
          <svg viewBox="0 0 14 14" fill="none" stroke="#555" strokeWidth="1.300"><path d="M5 3h6v5H5zM3 6h5v5H3z" /></svg>
        </button>
        <button type="button" aria-label="패널 닫기" className="size-[17px] rounded-sm border border-[#555]">
          <svg viewBox="0 0 14 14" fill="none" stroke="#555" strokeWidth="3"><path d="M3 3l8 8M11 3l-8 8" /></svg>
        </button>
      </header>
      <div className="flex h-[46px] items-center gap-3.5 pl-3">
        {panelTools.map((name, i) => (
          <div key={name} className="flex items-center">
            <button type="button" aria-label={panelLabels[i]}><Icon name={name} className="size-6" /></button>
            {name === 'expr' && <button type="button" aria-label="필터 메뉴" className="pl-1.5"><Caret /></button>}
          </div>
        ))}
      </div>
      <ul className="min-h-0 flex-1 border-t-2 border-l border-[#b5b5b5] bg-white">
        {layers.map((layer, i) => (
          <li key={i} className={clsx('flex h-[27px] items-center pr-2.5 pl-[35px]', layer.selected && 'bg-[#0a7bdb]')}>
            <CheckBox id={`layer-${i}`} checked={visible[i]} onChange={() => toggle(i)} />
            <span className="mr-[9px] ml-2.5 flex size-6 items-center justify-center">
              {layer.swatch ? (
                <span className={clsx('size-6 border border-[#444]', layer.swatch)}>
                  {layer.editing && <Icon name="pencil" className="size-[22px]" />}
                </span>
              ) : (
                <span className="size-3.5 rounded-full border border-[#666] bg-[#ff9e17]" />
              )}
            </span>
            <label
              htmlFor={`layer-${i}`}
              className={clsx('flex-1 text-[19px] leading-[26px] font-bold', layer.selected ? 'text-white underline underline-offset-2' : 'pl-px text-[#808080] italic')}
            >
              {layer.name}
            </label>
            {layer.memory && (
              <button type="button" aria-label="임시 레이어 저장" className="size-6 border border-[#d8d8d8] bg-[#f7f7f7] p-px">
                <svg viewBox="0 0 20 20" fill="none" stroke="#555">
                  <path d="M4 1v4M8 1v4M12 1v4M16 1v4M4 15v4M8 15v4M12 15v4M16 15v4" strokeWidth="1.200" />
                  <rect x="1" y="5" width="18" height="10" rx="2" strokeWidth="1.800" />
                </svg>
              </button>
            )}
          </li>
        ))}
      </ul>
      <div role="tablist" className="flex h-[37px] items-start pt-[2px] text-[18px]">
        <button type="button" role="tab" aria-selected className="h-[33px] w-[91px] rounded-b-sm border border-t-0 border-[#aaa] bg-[#f7f7f7]">레이어</button>
        <button type="button" role="tab" aria-selected={false} className="h-[30px] w-[89px] rounded-b-sm border border-l-0 border-[#b5b5b5] bg-[#dcdcdc]">탐색기</button>
        <div className="flex-1 border-t border-[#b5b5b5]" />
      </div>
    </section>
  )
}

/* ---------- map ---------- */

// Later entries are painted over earlier ones.
const regions = [
  '1433,397 1500,401.500 1527.500,311.600 1568,306.600 1588.300,363.600 1559.600,409 1609.800,451 1578,513.300 1640.400,541.600 1622.800,619 1663.700,691 1655,730 1620.500,800 1537.500,781 1552.400,725.300 1490,714 1446.800,614.300 1385.900,618 1384,612 1362,540',
  '1121.700,697 1197.500,669 1244.200,607.700 1241,637.700 1299.700,660.300 1433.800,615.500 1447,614.700 1490,714 1552.400,727.200 1527,802 1471,867 1434,841 1358.400,860 1327,881.400 1274,894.400 1258.400,891.300 1247,876 1258,868 1214.700,810.600 1136.300,809.400 1127,744.400 1121.200,701',
  '1323.400,278.300 1416.500,343 1440.300,406 1392.400,455.500 1396.300,506.800 1365.300,514 1386.700,613.200 1299.700,660.300 1241,637.700 1244.200,603.300 1197,668.300 1121.700,696.300 1041.400,603 1137.800,470 1208.200,442.300 1203.200,401 1240.300,378 1225.400,325.700',
  '1052.700,831 1085.700,847.300 1125.700,809.400 1214.700,810.600 1261.200,896.300 1400.800,860.700 1391,960 1375.500,1128 1299.200,1160 1252.700,1114.800 1205.300,1129.400 1147,1048 1146,1139.300 1094.300,1129.800 1063.700,1070.800 1005.700,1156.500 956.700,1079 990.200,1085 994.300,1000 1003.700,999 1027.300,1008.800 1056.700,976.700',
  '1062.400,636.500 1143.700,725.600 1111,762 1112.700,831.600 1052.700,831 1056.700,976.700 986.500,1005.800 901.600,935.300 917.600,878 866.500,849 898.800,825 849.800,818 790.200,736.300 834.700,704.200 866.500,723.700 915,694 1014,702.300',
  '1434,841 1471.300,867.300 1550,774.700 1621.300,801 1604.400,709.200 1743,666.400 1763.300,705.800 1747.500,954.700 1730,1010 1675.200,1018 1624.300,1077.300 1632.400,1154.300 1578.800,1202 1491.500,1184.700 1458,1223.300 1409.300,1153.400 1322,1157 1382,1116.700 1370.600,1058 1403.700,982 1372.700,958.300 1400.800,860.700',
]

const places: [string, number, number][] = [
  ['장성군', 1257, 508],
  ['담양군', 1521, 566],
  ['광주광역시', 1334, 760],
  ['함평군', 982, 817],
  ['나주시', 1201, 997],
  ['화순군', 1568, 961],
]

const MapCanvas = () => (
  <main className="min-w-0 flex-1 border-t border-l border-[#b5b5b5] bg-white">
    <svg viewBox="601 252 1352 995" className="h-full w-full" role="img" aria-label="지도">
      <g fill="#a47158" stroke="#232323" strokeWidth="1.400" strokeLinejoin="bevel">
        {regions.map((points, i) => <polygon key={i} points={points} />)}
      </g>
      <g fontSize="19" textAnchor="middle" fill="#323232" stroke="#fafafa" strokeWidth="5" strokeLinejoin="round" paintOrder="stroke">
        {places.map(([name, x, y]) => <text key={name} x={x} y={y}>{name}</text>)}
      </g>
    </svg>
  </main>
)

/* ---------- status bar ---------- */

function SpinBox({ id, value, width }: { id: string; value: string; width: string }) {
  return (
    <div className={clsx('flex h-[30px] rounded-sm border-2 border-[#b0b0b0] bg-white', width)}>
      <input id={id} defaultValue={value} className="w-0 min-w-0 flex-1 pl-1.5 outline-none" />
      <div className="flex w-5 flex-col items-center justify-center gap-1.5 border-l-2 border-[#b0b0b0] bg-[#f5f5f5]">
        <button type="button" aria-label="증가"><Caret className="rotate-180" /></button>
        <button type="button" aria-label="감소"><Caret /></button>
      </div>
    </div>
  )
}

function StatusBar() {
  const [render, setRender] = useState(true)
  return (
    <footer className="flex h-[42px] shrink-0 items-center bg-[#efefef] pr-1 pl-1.5 font-['Liberation_Sans','Noto_Sans_CJK_KR',sans-serif] text-[17px]">
      <div className="flex h-8 w-[534px] items-center rounded-sm border-2 border-[#b0b0b0] bg-white px-2.5">
        <svg viewBox="0 0 20 20" aria-hidden className="mr-2.5 size-5" fill="none" stroke="#888">
          <circle cx="8" cy="8" r="6" strokeWidth="2" /><path d="M12 13l6 6" strokeWidth="3" />
        </svg>
        <input aria-label="위치 찾기" placeholder="위치를 찾으려면 입력하세요 (Ctrl+K)" className="h-7 min-w-0 flex-1 text-[19px] leading-[28px] outline-none placeholder:text-[#808080]" />
      </div>
      <div className="flex-1" />
      <label htmlFor="coord" className="mr-1.5">좌표</label>
      <input id="coord" defaultValue="300092, 139936" className="h-8 w-[148px] rounded-sm border-2 border-[#b0b0b0] bg-white pl-2 outline-none" />
      <button type="button" aria-label="범위 표시" className="ml-1.5">
        <svg viewBox="0 0 24 24" className="size-6" fill="none" stroke="#111">
          <path d="M4 3q4-3 7 2l2 6q-5 4-8 1Q0 6 4 3z" fill="#fff" strokeWidth="2" /><path d="M6 3l3 9M9 2l3 8" strokeWidth="1.800" />
          <circle cx="14" cy="17" r="5.500" fill="#fff" strokeWidth="2" /><circle cx="14" cy="17" r="1.500" fill="#111" />
          <path d="M13 9l9-8M1 17l7-2" strokeDasharray="2 2" strokeWidth="1.500" />
        </svg>
      </button>
      <label htmlFor="scale" className="mr-1.5 ml-5">축척</label>
      <div className="relative h-8 w-[132px]">
        <select id="scale" className="h-8 w-full appearance-none rounded-sm border-2 border-[#b0b0b0] bg-white pl-1 outline-none">
          <option>1:441172</option>
        </select>
        <span className="pointer-events-none absolute inset-y-0.5 right-0.5 flex w-[30px] items-center justify-center border-l border-[#b0b0b0] bg-[#f7f7f7]"><Caret /></span>
      </div>
      <button type="button" aria-label="축척 잠금" className="mr-3 ml-[17px]">
        <svg viewBox="0 0 20 24" className="h-6 w-5"><path d="M5 12V7q0-5 5-5t5 5v5" fill="none" stroke="#888" strokeWidth="2.500" /><rect x="1" y="11" width="18" height="12" rx="2" fill="#666" /></svg>
      </button>
      <label htmlFor="magnifier" className="mr-1.5">확대경</label>
      <SpinBox id="magnifier" value="100%" width="w-[133px]" />
      <label htmlFor="rotation" className="mr-4 ml-3.5">회전</label>
      <SpinBox id="rotation" value="0.0 °" width="w-[133px]" />
      <span className="mr-2 ml-2.5 flex"><CheckBox id="render" checked={render} onChange={() => setRender(!render)} /></span>
      <label htmlFor="render">렌더링</label>
      <button type="button" className="ml-6 flex items-center gap-0.5">
        <svg viewBox="0 0 36 36" className="size-6"><WireGlobe color="#777" /></svg>
        EPSG:5186
      </button>
      <button type="button" aria-label="메시지" className="mr-10 ml-10">
        <svg viewBox="0 0 24 24" className="size-6"><path d="M12 1c7 0 11 4 11 9 0 4-2 7-5 8l4 5c-5 0-8-2-10-4C5 19 1 15 1 10s4-9 11-9z" fill="#666" /><g fill="#fff"><circle cx="7" cy="10" r="1.600" /><circle cx="12" cy="10" r="1.600" /><circle cx="17" cy="10" r="1.600" /></g></svg>
      </button>
    </footer>
  )
}

/* ---------- window ---------- */

const TitleBar = () => (
  <header className="flex h-[43px] shrink-0 items-center gap-1.5 bg-[#f3f3f3] pb-0.5 pl-2.5">
    <svg viewBox="0 0 24 24" aria-hidden className="size-6">
      <circle cx="12" cy="12" r="8.500" fill="none" stroke="#589632" strokeWidth="6" />
      <path d="M4 9a8.500 8.500 0 0 1 14-4" fill="none" stroke="#93b023" strokeWidth="5" />
      <path d="M12 12h5l7 8v4h-5l-7-7z" fill="#589632" stroke="#f3f3f3" strokeWidth=".8" />
      <path d="M10 10h5l-1 5-4-1z" fill="#ee7913" />
    </svg>
    <h1 className="flex-1 text-[19px]">*제목 없는 프로젝트 — QGIS</h1>
    <div className="flex items-center gap-[54px] pr-[26px]">
      <button type="button" aria-label="최소화"><svg viewBox="0 0 16 16" className="size-4" stroke="#000" strokeWidth="1.200"><path d="M0 8h16" /></svg></button>
      <button type="button" aria-label="최대화"><svg viewBox="0 0 16 16" className="size-4" fill="none" stroke="#000" strokeWidth="1.500"><rect x="1" y="1" width="14" height="14" rx="2" /></svg></button>
      <button type="button" aria-label="닫기"><svg viewBox="0 0 16 16" className="size-4" stroke="#000" strokeWidth="1.500"><path d="M1 1l14 14M15 1L1 15" /></svg></button>
    </div>
  </header>
)

export default function App() {
  return (
    <div className="h-screen bg-[#111] pt-px pr-px pb-px font-['Noto_Sans_CJK_KR','Noto_Sans',sans-serif] text-black">
      <div className="flex h-full flex-col overflow-hidden rounded-lg border-t border-r-2 border-b border-l-2 border-[#b5b5b5] bg-[#efefef]">
        <TitleBar />
        <nav className="flex h-[31px] shrink-0 items-center gap-[22px] border-b-2 border-[#d9d9d9] pl-[15px]">
          {menus.map(([name, key]) => (
            <button key={key} type="button" className="text-[19px] leading-[28px] whitespace-nowrap">
              {name} <span className="pl-1 text-[17px]">(<u className="underline-offset-2">{key}</u>)</span>
            </button>
          ))}
        </nav>
        {rows.map((groups, i) => <Toolbar key={i} groups={groups} />)}
        <div className="flex min-h-0 flex-1 pt-px">
          <SideBar />
          <LayerPanel />
          <MapCanvas />
        </div>
        <StatusBar />
      </div>
    </div>
  )
}
